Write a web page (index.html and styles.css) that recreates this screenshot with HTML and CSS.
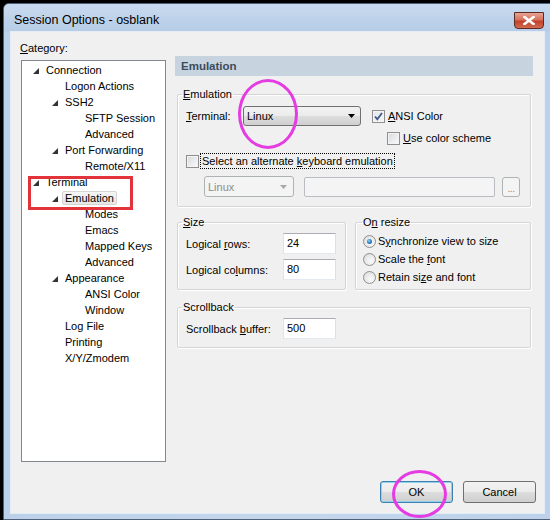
FILE: index.html
```html
<!DOCTYPE html>
<html>
<head>
<meta charset="utf-8">
<title>Session Options - osblank</title>
<link rel="stylesheet" href="styles.css">
</head>
<body>
<div class="window">
  <div class="titlebar">
    <span class="title">Session Options - osblank</span>
    <div class="close">
      <svg width="12" height="9" viewBox="0 0 12 9"><path d="M1.5 1 L10.5 8 M10.5 1 L1.5 8" stroke="#fff" stroke-width="2.6" stroke-linecap="square"/></svg>
    </div>
  </div>
  <div class="client">
    <div class="main">
      <div class="leftcol">
        <div class="catlabel"><u>C</u>ategory:</div>
        <div class="tree">
          <div class="row l0"><span class="arr"><svg width="6" height="6" viewBox="0 0 6 6"><polygon points="6,0 6,6 0,6"/></svg></span><span>Connection</span></div>
          <div class="row l1"><span class="arr"></span><span>Logon Actions</span></div>
          <div class="row l1"><span class="arr"><svg width="6" height="6" viewBox="0 0 6 6"><polygon points="6,0 6,6 0,6"/></svg></span><span>SSH2</span></div>
          <div class="row l2"><span class="arr"></span><span>SFTP Session</span></div>
          <div class="row l2"><span class="arr"></span><span>Advanced</span></div>
          <div class="row l1"><span class="arr"><svg width="6" height="6" viewBox="0 0 6 6"><polygon points="6,0 6,6 0,6"/></svg></span><span>Port Forwarding</span></div>
          <div class="row l2"><span class="arr"></span><span>Remote/X11</span></div>
          <div class="row l0"><span class="arr"><svg width="6" height="6" viewBox="0 0 6 6"><polygon points="6,0 6,6 0,6"/></svg></span><span>Terminal</span></div>
          <div class="row l1"><span class="arr"><svg width="6" height="6" viewBox="0 0 6 6"><polygon points="6,0 6,6 0,6"/></svg></span><span class="sel">Emulation</span></div>
          <div class="row l2"><span class="arr"></span><span>Modes</span></div>
          <div class="row l2"><span class="arr"></span><span>Emacs</span></div>
          <div class="row l2"><span class="arr"></span><span>Mapped Keys</span></div>
          <div class="row l2"><span class="arr"></span><span>Advanced</span></div>
          <div class="row l1"><span class="arr"><svg width="6" height="6" viewBox="0 0 6 6"><polygon points="6,0 6,6 0,6"/></svg></span><span>Appearance</span></div>
          <div class="row l2"><span class="arr"></span><span>ANSI Color</span></div>
          <div class="row l2"><span class="arr"></span><span>Window</span></div>
          <div class="row l1"><span class="arr"></span><span>Log File</span></div>
          <div class="row l1"><span class="arr"></span><span>Printing</span></div>
          <div class="row l1"><span class="arr"></span><span>X/Y/Zmodem</span></div>
        </div>
      </div>
      <div class="rightcol">
        <div class="header">Emulation</div>

        <fieldset class="group g-emu">
          <legend><u>E</u>mulation</legend>
          <div class="gbody">
            <div class="erow r1">
              <span class="lbl-term"><u>T</u>erminal:</span>
              <div class="combo"><span>Linux</span><svg width="7" height="4" viewBox="0 0 7 4"><polygon points="0,0 7,0 3.5,4" fill="#000"/></svg></div>
              <span class="cb checked"><svg width="11" height="11" viewBox="0 0 11 11"><path d="M2 5.5 L4.3 8.2 L9 2" fill="none" stroke="#3f5a8c" stroke-width="1.8"/></svg></span>
              <span class="cblbl"><u>A</u>NSI Color</span>
            </div>
            <div class="erow r2">
              <span class="cb"></span>
              <span class="cblbl"><u>U</u>se color scheme</span>
            </div>
            <div class="erow r3">
              <span class="cb"></span>
              <span class="focus">Select an alternate <u>k</u>eyboard emulation</span>
            </div>
            <div class="erow r4">
              <div class="combo dis"><span>Linux</span><svg width="7" height="4" viewBox="0 0 7 4"><polygon points="0,0 7,0 3.5,4" fill="#a8a8a8"/></svg></div>
              <div class="tfield dis"></div>
              <div class="dots">...</div>
            </div>
          </div>
        </fieldset>

        <div class="grouprow">
          <fieldset class="group g-size">
            <legend><u>S</u>ize</legend>
            <div class="gbody">
              <div class="frow first">
                <span class="flbl">Logical <u>r</u>ows:</span>
                <div class="tb">24</div>
              </div>
              <div class="frow">
                <span class="flbl">Logical co<u>l</u>umns:</span>
                <div class="tb">80</div>
              </div>
            </div>
          </fieldset>
          <fieldset class="group g-resize">
            <legend>O<u>n</u> resize</legend>
            <div class="gbody">
              <div class="rrow first"><span class="rb on"></span><span class="rlbl">S<u>y</u>nchronize view to size</span></div>
              <div class="rrow"><span class="rb"></span><span class="rlbl">Scale the <u>f</u>ont</span></div>
              <div class="rrow"><span class="rb"></span><span class="rlbl">Retain si<u>z</u>e and font</span></div>
            </div>
          </fieldset>
        </div>

        <fieldset class="group g-scroll">
          <legend>Scrollback</legend>
          <div class="gbody">
            <div class="frow first">
              <span class="flbl">Scrollback <u>b</u>uffer:</span>
              <div class="tb">500</div>
            </div>
          </div>
        </fieldset>
      </div>
    </div>
    <div class="buttons">
      <button class="btn default">OK</button>
      <button class="btn">Cancel</button>
    </div>
  </div>
</div>
<div class="mark redbox"></div>
<div class="mark ring ring1"></div>
<div class="mark ring ring2"></div>
</body>
</html>
```

FILE: styles.css
```css
html, body {
  margin: 0;
  padding: 0;
  width: 550px;
  height: 520px;
  overflow: hidden;
  background: #000;
}
body {
  position: relative;
  font-family: "Liberation Sans", Arial, sans-serif;
  font-size: 11px;
  color: #000;
}
u { text-decoration: underline; text-underline-offset: 1px; }

.window {
  margin: 3px 0 0 3px;
  width: 548px;
  height: 517px;
  box-sizing: border-box;
  border: 1px solid #4e6178;
  border-radius: 6px 0 0 0;
  background: linear-gradient(90deg, #bcd1e9, #c3d6ec 50%, #bdd2ea);
  padding: 0 6px 0 7px;
}
.titlebar {
  height: 28px;
  display: flex;
  align-items: flex-start;
  margin: 0 -6px 0 -7px;
  padding-left: 10px;
  background: linear-gradient(180deg, #c9dbef 0%, #bcd1e9 60%, #b7cde7 100%);
  border-radius: 5px 0 0 0;
}
.title {
  margin-top: 8px;
  font-size: 12.5px;
  line-height: 16px;
  color: #000;
}
.close {
  margin-left: auto;
  margin-right: 6px;
  margin-top: 8px;
  width: 30px;
  height: 17px;
  box-sizing: border-box;
  border: 1px solid #5c2c24;
  border-radius: 0 0 4px 4px;
  background: linear-gradient(180deg, #e8a493 0%, #d7715d 45%, #c2422b 55%, #d26a4e 100%);
  display: flex;
  align-items: center;
  justify-content: center;
}

.client {
  width: 533px;
  height: 481px;
  background: #f0f0f0;
  box-shadow: 0 0 0 1px #e4ecf6;
  display: flex;
  flex-direction: column;
}
.main {
  display: flex;
  padding-top: 8px;
}
.leftcol {
  margin-left: 9px;
  width: 146px;
}
.catlabel {
  line-height: 16px;
}
.tree {
  margin-top: 4px;
  margin-left: 1px;
  width: 145px;
  height: 402px;
  box-sizing: border-box;
  border: 1px solid #828790;
  background: #fff;
  padding-top: 1px;
}
.row {
  display: flex;
  align-items: center;
  height: 16px;
  line-height: 16px;
  white-space: nowrap;
}
.row.l0 { padding-left: 10px; }
.row.l1 { padding-left: 29px; }
.row.l2 { padding-left: 49px; }
.arr {
  width: 14px;
  flex: none;
  display: flex;
  align-items: center;
}
.arr svg { margin-left: 1px; margin-top: 1px; fill: #333; }
.sel {
  display: inline-block;
  line-height: 12px;
  padding: 0 2px 0 2px;
  margin-left: -3px;
  border: 1px solid #d4d4d4;
  border-radius: 2px;
  background: linear-gradient(180deg, #f5f5f5, #e6e6e6);
}

.rightcol {
  margin-left: 9px;
  width: 358px;
}
.header {
  margin-top: 16px;
  height: 20px;
  line-height: 20px;
  padding-left: 6px;
  background: #c7d3df;
  color: #3c4c5e;
  font-weight: bold;
  font-size: 11.5px;
}

.group {
  margin: 0;
  padding: 0;
  border: 1px solid #d5d5d5;
  box-shadow: inset 1px 1px 0 #fff, 1px 1px 0 #fff;
  border-radius: 2px;
  min-width: 0;
}
.group legend {
  padding: 0 1px;
  margin-left: 4px;
  line-height: 14px;
}
.gbody {
  padding: 0 0 0 8px;
}
.g-emu {
  margin: 11px 2px 0 2px;
  width: 354px;
  box-sizing: border-box;
}
.g-emu .gbody { padding-bottom: 9px; }
.erow {
  display: flex;
  align-items: center;
}
.erow.r1 { margin-top: 5px; height: 20px; }
.erow.r2 { margin-top: 4px; height: 16px; padding-left: 201px; }
.erow.r3 { margin-top: 7px; height: 16px; }
.erow.r4 { margin-top: 7px; height: 21px; padding-left: 18px; }
.lbl-term { width: 57px; flex: none; }
.combo {
  width: 118px;
  height: 20px;
  box-sizing: border-box;
  border: 1px solid #707070;
  border-radius: 3px;
  background: linear-gradient(180deg, #f2f2f2 0%, #ebebeb 50%, #dddddd 51%, #cfcfcf 100%);
  display: flex;
  align-items: center;
  justify-content: space-between;
  padding: 0 5px 0 3px;
}
.combo.dis {
  width: 90px;
  height: 21px;
  border-color: #adb2b5;
  background: #f4f4f4;
  color: #8d8d8d;
  padding-right: 6px;
}
.tfield.dis {
  margin-left: 10px;
  width: 191px;
  height: 20px;
  box-sizing: border-box;
  border: 1px solid #b9bcc0;
  border-radius: 2px;
  background: #f4f4f4;
}
.dots {
  margin-left: 7px;
  width: 18px;
  height: 20px;
  box-sizing: border-box;
  border: 1px solid #adb2b5;
  border-radius: 3px;
  background: #f4f4f4;
  color: #8d8d8d;
  font-size: 10px;
  line-height: 22px;
  text-align: center;
  letter-spacing: -0.5px;
}
.cb {
  width: 13px;
  height: 13px;
  flex: none;
  box-sizing: border-box;
  border: 1px solid #8f8f8f;
  background: linear-gradient(135deg, #d6d8db 0%, #eceeef 60%, #fbfbfb 100%);
  box-shadow: inset 0 0 0 1px #f4f4f4;
  display: flex;
  align-items: center;
  justify-content: center;
}
.cb.checked {
  background: linear-gradient(135deg, #e4e6e9 0%, #f6f7f8 100%);
}
.erow.r1 .cb { margin-left: 11px; }
.cblbl { margin-left: 3px; }
.focus {
  margin-left: 1px;
  padding: 0 1px;
  line-height: 14px;
  border: 1px dotted #000;
}

.grouprow {
  display: flex;
  align-items: stretch;
  margin: 8px 0 0 2px;
}
.g-size {
  width: 169px;
  box-sizing: border-box;
}
.g-size .gbody { padding-bottom: 9px; }
.g-resize {
  margin-left: 9px;
  width: 176px;
  box-sizing: border-box;
}
.g-resize legend { margin-left: 6px; }
.g-resize .gbody { padding-left: 7px; }
.frow {
  display: flex;
  align-items: center;
  height: 21px;
  margin-top: 5px;
}
.frow.first { margin-top: 4px; }
.flbl { width: 97px; flex: none; white-space: nowrap; }
.tb {
  width: 53px;
  height: 21px;
  box-sizing: border-box;
  border: 1px solid;
  border-color: #abadb3 #dbdfe6 #e3e9ef #e2e3ea;
  background: #fff;
  padding-left: 3px;
  line-height: 19px;
}
.rrow {
  display: flex;
  align-items: center;
  height: 18px;
}
.rrow.first { margin-top: 3px; }
.rb {
  width: 13px;
  height: 13px;
  flex: none;
  box-sizing: border-box;
  border: 1px solid #8f8f8f;
  border-radius: 50%;
  background: radial-gradient(circle at 65% 65%, #fafafa 0%, #e2e3e5 70%, #d3d5d8 100%);
  display: flex;
  align-items: center;
  justify-content: center;
}
.rb.on::after {
  content: "";
  width: 5px;
  height: 5px;
  border-radius: 50%;
  background: radial-gradient(circle at 40% 35%, #8fd0f5 0%, #2a82c4 50%, #1a4f86 100%);
}
.rlbl { margin-left: 2px; white-space: nowrap; }

.g-scroll {
  margin: 10px 2px 0 2px;
  width: 354px;
  box-sizing: border-box;
}
.g-scroll .gbody { padding-bottom: 8px; }

.buttons {
  margin-top: auto;
  display: flex;
  justify-content: flex-end;
  gap: 10px;
  padding: 0 8px 10px 0;
}
.btn {
  width: 73px;
  height: 22px;
  box-sizing: border-box;
  border: 1px solid #707070;
  border-radius: 3px;
  background: linear-gradient(180deg, #f2f2f2 0%, #ebebeb 50%, #dddddd 51%, #cfcfcf 100%);
  font-family: "Liberation Sans", Arial, sans-serif;
  font-size: 11px;
  color: #000;
  padding: 0;
}
.btn.default {
  border-color: #3c7fb1;
  box-shadow: inset 0 0 0 1px #8fd2ee;
}

.mark {
  position: absolute;
  box-sizing: border-box;
  pointer-events: none;
}
.redbox {
  left: 28px;
  top: 176px;
  width: 105px;
  height: 34px;
  border: 3px solid #e2333a;
}
.ring {
  border: 3px solid #e53be2;
  border-radius: 50%;
}
.ring1 {
  left: 238px;
  top: 79px;
  width: 60px;
  height: 70px;
}
.ring2 {
  left: 392px;
  top: 470px;
  width: 55px;
  height: 48px;
}
```
